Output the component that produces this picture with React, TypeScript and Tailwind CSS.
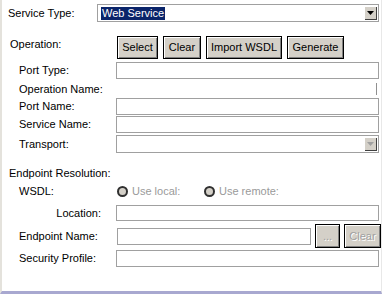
import React from "react";

const font = { fontFamily: '"Liberation Sans", Arial, sans-serif' };

function Field({ className = "" }: { className?: string }) {
  return <div className={"h-[17px] border border-[#a0a0a0] bg-white " + className} />;
}

function Btn({ label, w, disabled = false }: { label: string; w: string; disabled?: boolean }) {
  return (
    <div
      className={
        "flex items-center justify-center border border-black bg-[#d4d0c8] shadow-[inset_1px_1px_0_#ffffff,inset_-1px_-1px_0_#808080] " +
        w +
        (disabled ? " text-[#a0a0a0] [text-shadow:1px_1px_0_#ffffff]" : " text-black")
      }
    >
      {label}
    </div>
  );
}

function Arrow({ disabled = false }: { disabled?: boolean }) {
  return (
    <div className="flex h-full w-[13px] items-center justify-center bg-[#d4d0c8] shadow-[inset_1px_1px_0_#ffffff,inset_-1px_-1px_0_#404040]">
      <svg width="7" height="4" viewBox="0 0 7 4">
        <path d="M0 0H7L3.5 4Z" fill={disabled ? "#a0a0a0" : "#000"} />
      </svg>
    </div>
  );
}

function Radio({ label, className = "" }: { label: string; className?: string }) {
  return (
    <div className={"flex items-center " + className}>
      <div className="h-[11px] w-[11px] rounded-full border-2 border-[#303030] bg-[#d4d0c8]" />
      <span className="ml-[4px] text-[#9a9a9a]">{label}</span>
    </div>
  );
}

export default function App() {
  return (
    <div
      className="relative flex h-[297px] w-[384px] flex-col overflow-hidden bg-white text-[11px] leading-none text-black"
      style={font}
    >
      <div className="flex h-[294px] flex-col border-b-[3px] border-l-[2px] border-r border-b-[#a8a8d0] border-l-[#e4e2dc] border-r-[#e8e8e8] mr-[2px]">
        {/* Service Type */}
        <div className="mt-[4px] flex h-[18px] items-center">
          <span className="ml-[6px] w-[89px]">Service Type:</span>
          <div className="flex h-[18px] w-[282px] items-center border border-[#a0a0a0] pr-[1px]">
            <span className="ml-[3px] flex h-[13px] items-center bg-[#0a246a] px-[1px] text-white">Web Service</span>
            <div className="flex-1" />
            <div className="h-[14px]">
              <Arrow />
            </div>
          </div>
        </div>

        {/* Operation */}
        <div className="mt-[14px] flex h-[23px] items-start">
          <span className="ml-[8px] mt-[3px] w-[107px]">Operation:</span>
          <div className="flex h-[23px] gap-[5px]">
            <Btn label="Select" w="w-[41px]" />
            <Btn label="Clear" w="w-[38px]" />
            <Btn label="Import WSDL" w="w-[76px]" />
            <Btn label="Generate" w="w-[57px]" />
          </div>
        </div>

        {/* Port Type */}
        <div className="mt-[3px] flex h-[17px] items-center">
          <span className="ml-[17px] w-[97px]">Port Type:</span>
          <Field className="w-[263px]" />
        </div>

        {/* Operation Name */}
        <div className="mt-[1px] flex h-[18px] items-center">
          <span className="ml-[17px] w-[97px]">Operation Name:</span>
          <div className="flex-1" />
          <div className="mr-[4px] h-[12px] w-[1px] bg-[#909090]" />
        </div>

        {/* Port Name */}
        <div className="flex h-[17px] items-center">
          <span className="ml-[17px] w-[97px]">Port Name:</span>
          <Field className="w-[263px]" />
        </div>

        {/* Service Name */}
        <div className="mt-[1px] flex h-[17px] items-center">
          <span className="ml-[17px] w-[97px]">Service Name:</span>
          <Field className="w-[263px]" />
        </div>

        {/* Transport */}
        <div className="mt-[2px] flex h-[18px] items-center">
          <span className="ml-[17px] w-[97px]">Transport:</span>
          <div className="flex h-[18px] w-[263px] justify-end border border-[#a0a0a0] p-[1px]">
            <Arrow disabled />
          </div>
        </div>

        {/* Endpoint Resolution */}
        <div className="mt-[12px] flex h-[17px] items-center">
          <span className="ml-[7px]">Endpoint Resolution:</span>
        </div>

        {/* WSDL */}
        <div className="mt-[1px] flex h-[17px] items-center">
          <span className="ml-[17px] w-[98px]">WSDL:</span>
          <Radio label="Use local:" className="w-[87px]" />
          <Radio label="Use remote:" />
        </div>

        {/* Location */}
        <div className="mt-[5px] flex h-[16px] items-center">
          <span className="w-[99px] text-right">Location:</span>
          <div className="w-[15px]" />
          <div className="h-[16px] w-[263px] border border-[#a0a0a0]" />
        </div>

        {/* Endpoint Name */}
        <div className="mt-[3px] flex h-[24px] items-center">
          <span className="ml-[17px] w-[98px]">Endpoint Name:</span>
          <Field className="w-[194px]" />
          <div className="ml-[4px] flex h-[24px]">
            <Btn label="..." w="w-[25px]" disabled />
          </div>
          <div className="ml-[4px] flex h-[24px]">
            <Btn label="Clear" w="w-[37px]" disabled />
          </div>
        </div>

        {/* Security Profile */}
        <div className="mt-[2px] flex h-[17px] items-center">
          <span className="ml-[17px] w-[97px]">Security Profile:</span>
          <Field className="w-[263px]" />
        </div>
      </div>
    </div>
  );
}
